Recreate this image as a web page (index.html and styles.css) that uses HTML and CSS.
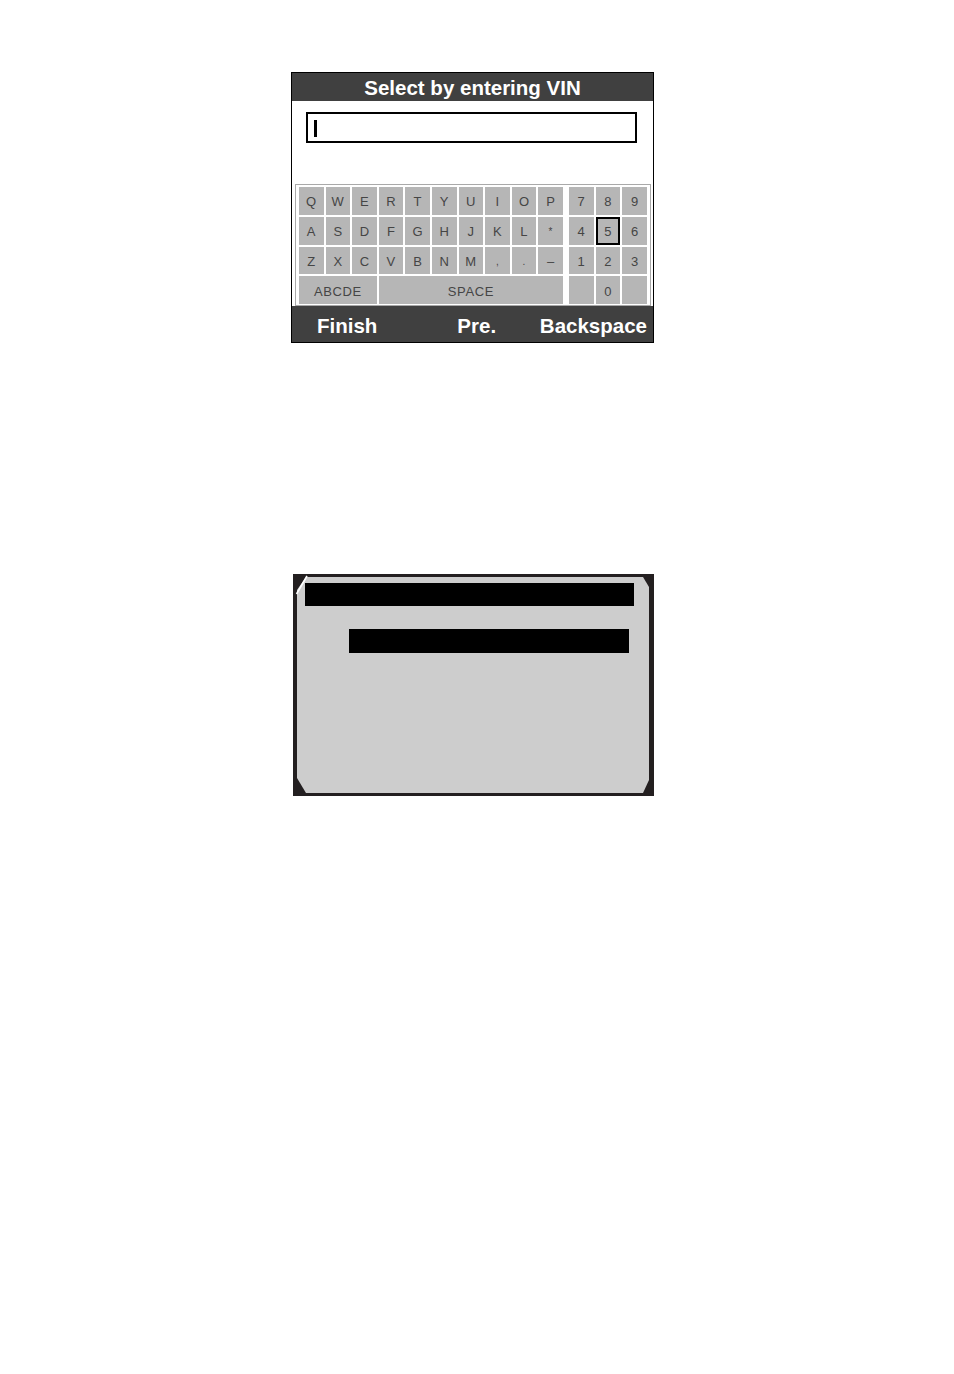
FILE: index.html
```html
<!DOCTYPE html>
<html>
<head>
<meta charset="utf-8">
<link rel="stylesheet" href="styles.css">
</head>
<body>
<div class="page">
  <div class="screen1">
    <div class="title">Select by entering VIN</div>
    <div class="content">
      <div class="input"><span class="cursor"></span></div>
      <div class="panel">
        <div class="letters">
          <div class="key">Q</div><div class="key">W</div><div class="key">E</div><div class="key">R</div><div class="key">T</div><div class="key">Y</div><div class="key">U</div><div class="key">I</div><div class="key">O</div><div class="key">P</div>
          <div class="key">A</div><div class="key">S</div><div class="key">D</div><div class="key">F</div><div class="key">G</div><div class="key">H</div><div class="key">J</div><div class="key">K</div><div class="key">L</div><div class="key small">*</div>
          <div class="key">Z</div><div class="key">X</div><div class="key">C</div><div class="key">V</div><div class="key">B</div><div class="key">N</div><div class="key">M</div><div class="key small">,</div><div class="key small">.</div><div class="key">–</div>
          <div class="key span3">ABCDE</div><div class="key span7">SPACE</div>
        </div>
        <div class="numpad">
          <div class="key">7</div><div class="key">8</div><div class="key">9</div>
          <div class="key">4</div><div class="key sel">5</div><div class="key">6</div>
          <div class="key">1</div><div class="key">2</div><div class="key">3</div>
          <div class="key"></div><div class="key">0</div><div class="key"></div>
        </div>
      </div>
    </div>
    <div class="bar">
      <span class="b-finish">Finish</span>
      <span class="b-pre">Pre.</span>
      <span class="b-back">Backspace</span>
    </div>
  </div>

  <div class="screen2">
    <div class="lcd">
      <div class="blk blk1"></div>
      <div class="blk blk2"></div>
    </div>
    <svg class="glint" width="20" height="24" viewBox="0 0 20 24">
      <line x1="3.5" y1="20" x2="14" y2="2" stroke="#ffffff" stroke-width="1.6"/>
    </svg>
  </div>
</div>
</body>
</html>
```
FILE: styles.css
```css
html, body {
  margin: 0;
  padding: 0;
  background: #ffffff;
}
body {
  font-family: "Liberation Sans", Arial, sans-serif;
}
.page {
  width: 954px;
  height: 1374px;
  padding-top: 72px;
  box-sizing: border-box;
}
.screen1 {
  margin-left: 291px;
  width: 363px;
  height: 271px;
  border: 1px solid #000;
  box-sizing: border-box;
  display: flex;
  flex-direction: column;
  background: #fff;
}
.title {
  height: 28px;
  background: #404040;
  color: #fff;
  font-weight: bold;
  font-size: 20.5px;
  line-height: 30px;
  text-align: center;
  padding-left: 0;
}
.content {
  height: 205px;
  display: flex;
  flex-direction: column;
}
.input {
  margin-top: 11px;
  margin-left: 14px;
  width: 331px;
  height: 31px;
  border: 2px solid #000;
  box-sizing: border-box;
  padding: 6px 0 0 6px;
}
.cursor {
  display: block;
  width: 3px;
  height: 17px;
  background: #000;
}
.panel {
  margin-top: 41px;
  margin-left: 3px;
  width: 356px;
  height: 122px;
  border: 1px solid #a9a9a9;
  box-sizing: border-box;
  padding: 2px 0 0 3px;
  display: flex;
  gap: 6px;
}
.letters {
  width: 264px;
  height: 117px;
  display: grid;
  grid-template-columns: repeat(10, 1fr);
  grid-template-rows: repeat(4, 1fr);
  gap: 2px;
}
.numpad {
  width: 78px;
  height: 117px;
  display: grid;
  grid-template-columns: repeat(3, 1fr);
  grid-template-rows: repeat(4, 1fr);
  gap: 2px;
}
.key {
  background: #b6b6b6;
  color: #454545;
  font-size: 13px;
  display: flex;
  align-items: center;
  justify-content: center;
  box-sizing: border-box;
  letter-spacing: 0.3px;
  padding-top: 2px;
}
.key.small {
  font-size: 10px;
}
.key.span3 {
  grid-column: span 3;
  letter-spacing: 0.6px;
}
.key.span7 {
  grid-column: span 7;
  letter-spacing: 0.6px;
}
.key.sel {
  border: 2px solid #000;
  padding-top: 2px;
}
.bar {
  height: 36px;
  background: #404040;
  color: #fff;
  font-weight: bold;
  font-size: 20.5px;
  display: flex;
  align-items: center;
  padding-top: 4px;
  box-sizing: border-box;
}
.b-finish {
  margin-left: 25px;
}
.b-pre {
  margin-left: 80px;
}
.b-back {
  margin-left: auto;
  margin-right: 6px;
}
.screen2 {
  position: relative;
  margin-top: 231px;
  margin-left: 293px;
  width: 361px;
  height: 222px;
  background: #231f20;
  box-sizing: border-box;
  padding: 3px 5px 3px 4px;
}
.lcd {
  width: 352px;
  height: 216px;
  background: #cdcdcd;
  clip-path: polygon(0 13px, 9px 0, 346px 0, 352px 10px, 352px 203px, 346px 216px, 9px 216px, 0 201px);
  display: flex;
  flex-direction: column;
}
.blk {
  background: #000;
}
.blk1 {
  margin-top: 6px;
  margin-left: 8px;
  width: 329px;
  height: 23px;
}
.blk2 {
  margin-top: 23px;
  margin-left: 52px;
  width: 280px;
  height: 24px;
}
.glint {
  position: absolute;
  left: 0;
  top: 0;
}
```
